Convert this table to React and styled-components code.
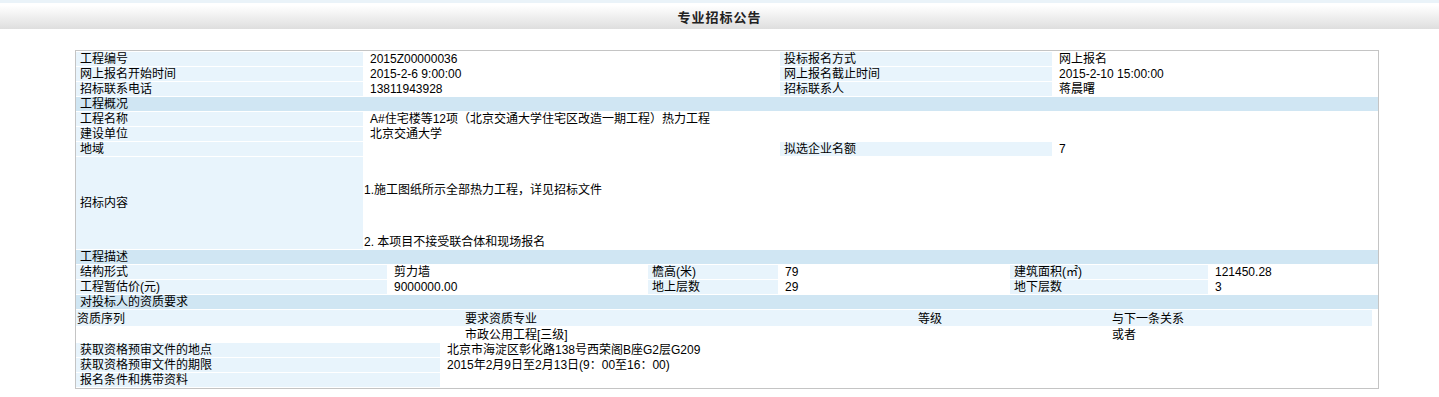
import React from "react";
import styled, { createGlobalStyle } from "styled-components";

//*! Styles
const GlobalStyle = createGlobalStyle`
  body {
    margin: 0;
    background: #fff;
    font-family: "Liberation Sans", "Noto Sans CJK SC", sans-serif;
    font-size: 12px;
    color: #000;
  }
`;

const TitleBar = styled.div`
  height: 26px;
  border-top: 3px solid #eaf3f9;
  background: linear-gradient(#ffffff 10%, #dedede 100%);
  text-align: center;
  font-family: "Noto Sans CJK SC", sans-serif;
  font-size: 13px;
  font-weight: bold;
  letter-spacing: 1px;
  line-height: 28px;
  color: #222;
`;

const Frame = styled.div`
  width: 1302px;
  margin: 21px 0 0 75px;
  padding-top: 1px;
  border: 1px solid #c4c4c4;
`;

const Grid = styled.table`
  width: 100%;
  border-collapse: collapse;
  table-layout: fixed;
`;

const bg = {
  label: "#e8f4fc",
  section: "#d0e6f3",
  value: "#ffffff",
};

const Cell = styled.td`
  height: 13px;
  padding: 1px 0 0 ${(p) => (p.$kind === "value" ? "7px" : "4px")};
  border-bottom: 1px solid #fff;
  background: ${(p) => bg[p.$kind || "label"]};
  line-height: 13px;
  vertical-align: middle;
  white-space: nowrap;
  overflow: hidden;
`;

const Lines = styled.div`
  line-height: 13px;
  white-space: pre;
  margin-left: -6px;
`;

const Nest = styled.table`
  width: 1296px;
  border-collapse: collapse;
  table-layout: fixed;
`;

const NestRow = styled.tr`
  background: ${(p) => (p.$head ? "#e8f4fc" : "#fff")};
`;

const NestCell = styled.td`
  height: 15px;
  padding: 1px 0 0 1px;
  line-height: 14px;
  white-space: nowrap;
`;

const Wrap = styled.td`
  padding: 0;
  border-bottom: 1px solid #fff;
`;
//*! End of Styles

const Cols = ({ widths }) => (
  <colgroup>
    {widths.map((w, i) => (
      <col key={i} style={{ width: w }} />
    ))}
  </colgroup>
);

export default function App() {
  return (
    <main>
      <GlobalStyle />
      <TitleBar>专业招标公告</TitleBar>
      <Frame>
        <Grid>
          <Cols widths={[287, 417, 272, 326]} />
          <tbody>
            <tr>
              <Cell>工程编号</Cell>
              <Cell $kind="value">2015Z00000036</Cell>
              <Cell>投标报名方式</Cell>
              <Cell $kind="value">网上报名</Cell>
            </tr>
            <tr>
              <Cell>网上报名开始时间</Cell>
              <Cell $kind="value">2015-2-6 9:00:00</Cell>
              <Cell>网上报名截止时间</Cell>
              <Cell $kind="value">2015-2-10 15:00:00</Cell>
            </tr>
            <tr>
              <Cell>招标联系电话</Cell>
              <Cell $kind="value">13811943928</Cell>
              <Cell>招标联系人</Cell>
              <Cell $kind="value">蒋晨曙</Cell>
            </tr>
            <tr>
              <Cell $kind="section" colSpan={4}>工程概况</Cell>
            </tr>
            <tr>
              <Cell>工程名称</Cell>
              <Cell $kind="value" colSpan={3}>
                A#住宅楼等12项（北京交通大学住宅区改造一期工程）热力工程
              </Cell>
            </tr>
            <tr>
              <Cell>建设单位</Cell>
              <Cell $kind="value" colSpan={3}>北京交通大学</Cell>
            </tr>
            <tr>
              <Cell>地域</Cell>
              <Cell $kind="value"></Cell>
              <Cell>拟选企业名额</Cell>
              <Cell $kind="value">7</Cell>
            </tr>
            <tr>
              <Cell>招标内容</Cell>
              <Cell $kind="value" colSpan={3}>
                <Lines>
                  {"\n\n1.施工图纸所示全部热力工程，详见招标文件\n\n\n\n2. 本项目不接受联合体和现场报名"}
                </Lines>
              </Cell>
            </tr>
            <tr>
              <Cell $kind="section" colSpan={4}>工程描述</Cell>
            </tr>
          </tbody>
        </Grid>
        <Grid>
          <Cols widths={[311, 261, 130, 232, 198, 170]} />
          <tbody>
            <tr>
              <Cell>结构形式</Cell>
              <Cell $kind="value">剪力墙</Cell>
              <Cell>檐高(米)</Cell>
              <Cell $kind="value">79</Cell>
              <Cell>建筑面积(㎡)</Cell>
              <Cell $kind="value">121450.28</Cell>
            </tr>
            <tr>
              <Cell>工程暂估价(元)</Cell>
              <Cell $kind="value">9000000.00</Cell>
              <Cell>地上层数</Cell>
              <Cell $kind="value">29</Cell>
              <Cell>地下层数</Cell>
              <Cell $kind="value">3</Cell>
            </tr>
            <tr>
              <Cell $kind="section" colSpan={6}>对投标人的资质要求</Cell>
            </tr>
            <tr>
              <Wrap colSpan={6}>
                <Nest>
                  <Cols widths={[388, 453, 194, 261]} />
                  <tbody>
                    <NestRow $head>
                      <NestCell>资质序列</NestCell>
                      <NestCell>要求资质专业</NestCell>
                      <NestCell>等级</NestCell>
                      <NestCell>与下一条关系</NestCell>
                    </NestRow>
                    <NestRow>
                      <NestCell></NestCell>
                      <NestCell>市政公用工程[三级]</NestCell>
                      <NestCell></NestCell>
                      <NestCell>或者</NestCell>
                    </NestRow>
                  </tbody>
                </Nest>
              </Wrap>
            </tr>
          </tbody>
        </Grid>
        <Grid>
          <Cols widths={[364, 938]} />
          <tbody>
            <tr>
              <Cell>获取资格预审文件的地点</Cell>
              <Cell $kind="value">北京市海淀区彰化路138号西荣阁B座G2层G209</Cell>
            </tr>
            <tr>
              <Cell>获取资格预审文件的期限</Cell>
              <Cell $kind="value">2015年2月9日至2月13日(9：00至16：00)</Cell>
            </tr>
            <tr>
              <Cell>报名条件和携带资料</Cell>
              <Cell $kind="value"></Cell>
            </tr>
          </tbody>
        </Grid>
      </Frame>
    </main>
  );
}
